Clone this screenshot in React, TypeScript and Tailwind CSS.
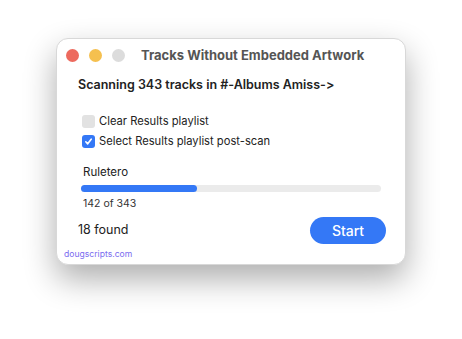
export default function App() {
  return (
    <div
      className="h-[339px] w-[462px] bg-white pl-[56px] pt-[38px] [font-feature-settings:'calt'_0]"
      style={{ fontFamily: "Inter, 'Noto Sans', sans-serif" }}
    >
      <div className="flex h-[227px] w-[350px] flex-col rounded-[12px] border border-[#d8d8d8] bg-white shadow-[0_14px_32px_rgba(0,0,0,0.32)]">
        <div className="flex h-[32px] shrink-0 items-center pl-[9px]">
          <div className="flex gap-[10px]">
            <span className="h-[13px] w-[13px] rounded-full bg-[#ed6a5e]" />
            <span className="h-[13px] w-[13px] rounded-full bg-[#f5c04f]" />
            <span className="h-[13px] w-[13px] rounded-full bg-[#dcdcdc]" />
          </div>
          <div className="ml-[16px] text-[13px] font-bold leading-[16px] text-[#555]">Tracks Without Embedded Artwork</div>
        </div>
        <div className="mt-[6px] pl-[21px] text-[12.5px] font-semibold leading-[16px] text-[#222]">
          Scanning 343 tracks in #-Albums Amiss-&gt;
        </div>
        <div className="mt-[20px] flex flex-col gap-[4px] pl-[25px] text-[11.2px] leading-[16px] text-[#222]">
          <label className="flex items-center gap-[4px]">
            <span className="h-[13px] w-[13px] rounded-[3px] bg-[#e2e2e2]" />
            Clear Results playlist
          </label>
          <label className="flex items-center gap-[4px]">
            <span className="flex h-[13px] w-[13px] items-center justify-center rounded-[3px] bg-[#3478f6]">
              <svg width="9" height="9" viewBox="0 0 10 10" fill="none">
                <path d="M2 5.3 L4.1 7.6 L8 2.4" stroke="white" strokeWidth="1.8" strokeLinecap="round" strokeLinejoin="round" />
              </svg>
            </span>
            Select Results playlist post-scan
          </label>
        </div>
        <div className="mt-[16px] pl-[26px] text-[11.5px] leading-[14px] text-[#222]">Ruletero</div>
        <div className="ml-[24px] mt-[6px] h-[7px] w-[300px] shrink-0 rounded-full bg-[#ebebeb]">
          <div className="h-full w-[116px] rounded-full bg-[#3478f6]" />
        </div>
        <div className="mt-[5px] pl-[26px] text-[10.5px] leading-[14px] text-[#333]">142 of 343</div>
        <div className="mt-[6px] flex items-center justify-between pl-[21px] pr-[19px]">
          <span className="text-[12.5px] text-[#222]">18 found</span>
          <button className="flex h-[27px] w-[76px] items-center justify-center rounded-full bg-[#3478f6] text-[14px] font-medium text-white">
            Start
          </button>
        </div>
        <div className="mt-[4px] pl-[7px] text-[8.6px] leading-[12px] text-[#7b6cf0]">dougscripts.com</div>
      </div>
    </div>
  );
}
